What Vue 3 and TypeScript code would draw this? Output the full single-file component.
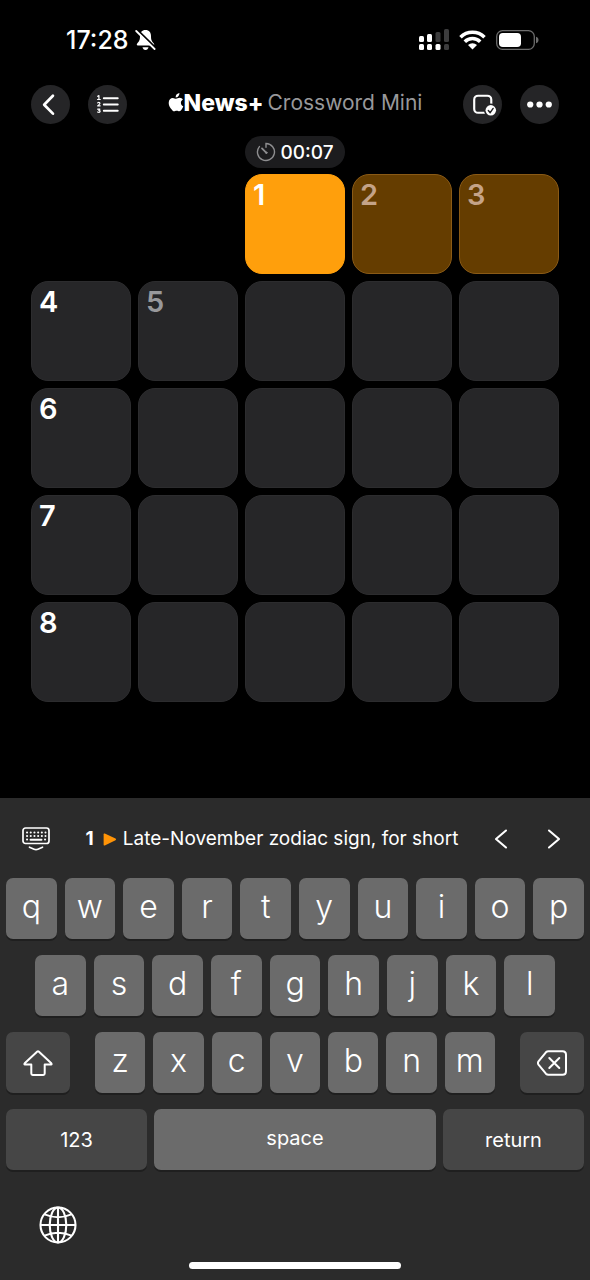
<script setup lang="ts">
import { ref } from 'vue'

interface Cell {
  id: string
  num?: number
  dim?: boolean
  blank?: boolean
  word?: boolean
}

const layout: (number | null)[][] = [
  [null, null, 1, 2, 3],
  [4, 5, 0, 0, 0],
  [6, 0, 0, 0, 0],
  [7, 0, 0, 0, 0],
  [8, 0, 0, 0, 0],
]
const dimmed = [2, 3, 5]

const cells: Cell[] = layout.flatMap((row, r) =>
  row.map((n, c) => ({
    id: `${r}-${c}`,
    num: n || undefined,
    dim: n !== null && dimmed.includes(n),
    blank: n === null,
    word: r === 0 && n !== null,
  })),
)

const selected = ref('0-2')
const topRow = 'qwertyuiop'.split('')
const homeRow = 'asdfghjkl'.split('')
const bottomRow = 'zxcvbnm'.split('')
</script>

<template>
  <div class="screen">
    <div class="status">
      <div class="status-left">
        <span class="clock">17:28</span>
        <svg width="21" height="22" viewBox="0 0 21 22" aria-hidden="true">
          <path d="M10.5 1C6.8 1 5 3.600 5 7c0 4.200-1 5.600-2.600 7.200-.9.900-.9 2.300.5 2.300h15.200c1.400 0 1.400-1.400.5-2.300C17 12.600 16 11.200 16 7c0-3.400-1.800-6-5.500-6z" fill="#fff" />
          <path d="M7.500 18.200h6c-.3 1.600-1.400 2.800-3 2.800s-2.700-1.200-3-2.800z" fill="#fff" />
          <path d="M2 .600l19 18.600" stroke="#000" stroke-width="2" />
          <path d="M1.200 2l18.400 18" stroke="#fff" stroke-width="1.800" stroke-linecap="round" />
        </svg>
      </div>
      <div class="status-right">
        <svg width="30" height="22" viewBox="0 0 30 22" aria-hidden="true">
          <g fill="#fff">
            <rect x="0" y="7" width="5" height="6" rx="1.500" />
            <rect x="8" y="5" width="5" height="8" rx="1.500" />
            <rect x="0" y="15" width="5" height="6" rx="1.500" />
            <rect x="8" y="15" width="5" height="6" rx="1.500" />
            <rect x="16.500" y="15" width="5" height="6" rx="1.500" />
          </g>
          <g fill="#3c3c3d">
            <rect x="16.500" y="3" width="5" height="10" rx="1.500" />
            <rect x="25" y="0" width="5" height="13" rx="1.500" />
            <rect x="25" y="15" width="5" height="6" rx="1.500" />
          </g>
        </svg>
        <svg width="27" height="20" viewBox="0 0 27 20" aria-hidden="true">
          <g fill="none" stroke="#fff" stroke-width="3.600">
            <path d="M1.500 7.200a17.200 17.200 0 0 1 24 0" />
            <path d="M5.800 11.700a11 11 0 0 1 15.400 0" />
          </g>
          <path d="M9 14.900a6.700 6.700 0 0 1 9 0L13.500 19.500z" fill="#fff" />
        </svg>
        <svg width="43" height="20" viewBox="0 0 43 20" aria-hidden="true">
          <rect x=".7" y=".7" width="37.600" height="18.600" rx="5.800" fill="none" stroke="#6c6c6c" stroke-width="1.300" />
          <rect x="3" y="3" width="22" height="14" rx="3.800" fill="#fff" />
          <path d="M40 6.800c1.800.5 2.500 1.700 2.500 3.200s-.7 2.700-2.500 3.200z" fill="#6c6c6c" />
        </svg>
      </div>
    </div>

    <header class="header">
      <div class="pair">
        <button class="round" aria-label="Back">
          <svg width="39" height="39" viewBox="0 0 40 40">
            <path d="M22.500 11l-9 9.200 9 9.200" fill="none" stroke="#fff" stroke-width="2.800" stroke-linecap="round" stroke-linejoin="round" />
          </svg>
        </button>
        <button class="round" aria-label="Puzzle list">
          <svg width="39" height="39" viewBox="0 0 40 40" fill="none" stroke="#fff" stroke-linecap="round" stroke-linejoin="round">
            <path d="M16.200 13.500h14.300M16.200 20h14.300M16.200 26.500h14.300" stroke-width="2" />
            <path d="M10 11.600l1.200-.8v4M9.800 14.900h2.800M9.900 18.400q1.200-1.100 2.100-.2.600.9-.4 1.700L9.900 21.400h2.600M9.900 24.800h2.300l-1.100 1.300q1.500 0 1.300 1.200-.8 1.300-2.600.4" stroke-width="1.200" />
          </svg>
        </button>
      </div>
      <h1 class="title">
        <svg width="16" height="19" viewBox="0 0 15 19" aria-hidden="true">
          <path d="M10.900 0c.1 1.300-.4 2.400-1.100 3.200-.7.800-1.700 1.300-2.600 1.200-.1-1.200.5-2.400 1.100-3.100C9 .5 10 .1 10.900 0zM14.400 6.600c-1.300.8-2 1.800-2 3.200 0 1.600.9 2.900 2.400 3.500-.4 1.200-1 2.300-1.700 3.300-.7.900-1.300 1.700-2.300 1.700-1 0-1.300-.6-2.600-.6s-1.700.6-2.600.6c-1 0-1.700-.8-2.400-1.800C1.800 14.900.2 12.500.2 9.900c0-3.200 2-5 4.100-5 1.200 0 2.300.8 3.300.8.900 0 2.100-.9 3.600-.9 1.300 0 2.500.7 3.200 1.800z" fill="#fff" />
        </svg><strong>News+</strong><span>Crossword Mini</span>
      </h1>
      <div class="pair">
        <button class="round" aria-label="Check puzzle">
          <svg width="39" height="39" viewBox="0 0 40 40">
            <rect x="11.500" y="11" width="17.500" height="17.500" rx="4" fill="none" stroke="#fff" stroke-width="2.200" />
            <circle cx="28.500" cy="26" r="7" fill="#252527" />
            <circle cx="28.500" cy="26" r="5.400" fill="#fff" />
            <path d="M26 26.200l1.900 2.200 3-4.400" fill="none" stroke="#252527" stroke-width="1.500" stroke-linecap="round" stroke-linejoin="round" />
          </svg>
        </button>
        <button class="round" aria-label="More">
          <svg width="39" height="39" viewBox="0 0 40 40" fill="#fff">
            <circle cx="10.500" cy="20" r="3.200" /><circle cx="20" cy="20" r="3.200" /><circle cx="29.500" cy="20" r="3.200" />
          </svg>
        </button>
      </div>
    </header>

    <main class="board">
      <div class="timer">
        <svg width="20" height="20" viewBox="0 0 20 20" fill="none" stroke="#8e8e90" stroke-linecap="round" aria-hidden="true">
          <path d="M10 5.200V1.500A8.500 8.500 0 1 1 3.400 4.600" stroke-width="1.400" />
          <path d="M6 6.400L10.400 10.800" stroke-width="1.800" />
          <circle cx="10.300" cy="10.700" r=".7" fill="#8e8e90" />
        </svg>
        <time>00:07</time>
      </div>
      <div class="grid">
        <template v-for="cell in cells" :key="cell.id">
          <span v-if="cell.blank" />
          <button
            v-else
            class="cell"
            :class="{ word: cell.word, selected: cell.id === selected, dim: cell.dim }"
            :aria-label="cell.num ? `Square ${cell.num}` : 'Empty square'"
            @click="selected = cell.id"
          >{{ cell.num }}</button>
        </template>
      </div>
    </main>

    <section class="keyboard">
      <div class="clue">
        <button class="plain" aria-label="Hide keyboard">
          <svg width="28" height="24" viewBox="0 0 28 24" fill="none" stroke="#fff" stroke-linecap="round">
            <rect x="1" y="1" width="26" height="15.500" rx="2.500" stroke-width="1.700" />
            <path d="M5 5.500h18.500M5 9h18.500M5 12.500h.1M23 12.500h.1" stroke-width="2" stroke-dasharray=".1 3.600" />
            <path d="M8.500 12.700h11" stroke-width="1.900" />
            <path d="M7.500 20.200l4.600 2q1.900.8 3.800 0l4.600-2" stroke-width="1.700" />
          </svg>
        </button>
        <p class="clue-text">
          <b>1</b>
          <svg width="14" height="13" viewBox="0 0 14 13" aria-hidden="true">
            <path d="M.6 1.400Q.6.200 1.800.6L12.500 5.600Q13.800 6.500 12.500 7.200L1.800 12.400Q.6 12.800.6 11.600z" fill="#ff9407" />
          </svg>
          <span>Late-November zodiac sign, for short</span>
        </p>
        <div class="arrows">
          <button class="plain" aria-label="Previous clue">
            <svg width="14" height="20" viewBox="0 0 14 20"><path d="M12 1.500L2 10l10 8.500" fill="none" stroke="#fff" stroke-width="2.100" stroke-linecap="round" stroke-linejoin="round" /></svg>
          </button>
          <button class="plain" aria-label="Next clue">
            <svg width="14" height="20" viewBox="0 0 14 20"><path d="M2 1.500L12 10 2 18.500" fill="none" stroke="#fff" stroke-width="2.100" stroke-linecap="round" stroke-linejoin="round" /></svg>
          </button>
        </div>
      </div>

      <div class="keys">
        <div class="row">
          <button v-for="k in topRow" :key="k" class="key">{{ k }}</button>
        </div>
        <div class="row home">
          <button v-for="k in homeRow" :key="k" class="key">{{ k }}</button>
        </div>
        <div class="row lower">
          <button class="key dark side" aria-label="Shift">
            <svg width="30" height="26" viewBox="0 0 30 26"><path d="M14.300 1.600q.7-.6 1.400 0L28.300 13.300q.8 1-.4 1.300H21.700v9q0 1.400-1.400 1.400H9.700q-1.400 0-1.400-1.400v-9H2.100q-1.200-.3-.4-1.300z" fill="none" stroke="#fff" stroke-width="2" stroke-linejoin="round" /></svg>
          </button>
          <div class="row letters">
            <button v-for="k in bottomRow" :key="k" class="key">{{ k }}</button>
          </div>
          <button class="key dark side" aria-label="Delete">
            <svg width="30" height="26" viewBox="0 0 30 26" fill="none" stroke="#fff" stroke-width="2" stroke-linejoin="round" stroke-linecap="round">
              <path d="M11.500 1.200H25.500q3.500 0 3.500 3.500V21.300q0 3.500-3.500 3.500H11.500q-1.500 0-2.600-1.100L1.500 14.600q-1.200-1.600 0-3.200L8.900 2.300Q10 1.200 11.500 1.200z" />
              <path d="M12.300 8l10 10M22.300 8l-10 10" />
            </svg>
          </button>
        </div>
        <div class="row bottom">
          <button class="key dark wide">123</button>
          <button class="key space">space</button>
          <button class="key dark wide">return</button>
        </div>
      </div>

      <div class="foot">
        <button class="plain" aria-label="Next keyboard">
          <svg width="38" height="38" viewBox="0 0 38 38" fill="none" stroke="#fff" stroke-width="2.100">
            <circle cx="19" cy="19" r="17.500" />
            <ellipse cx="19" cy="19" rx="8.300" ry="17.500" />
            <path d="M19 1.500v35M1.500 19h35M5.500 8.400q13.500 5.600 27 0M5.500 29.600q13.500-5.600 27 0" />
          </svg>
        </button>
      </div>
      <div class="home-bar" />
    </section>
  </div>
</template>

<style>
body {
  margin: 0;
  background: #000;
}
</style>

<style scoped>
.screen {
  display: flex;
  flex-direction: column;
  min-height: 100vh;
  background: #000;
  color: #fff;
  font-family: Inter, "Liberation Sans", sans-serif;
}
button {
  margin: 0;
  padding: 0;
  border: 0;
  font: inherit;
  color: inherit;
  cursor: pointer;
}
svg {
  display: block;
  flex: none;
}
.status {
  display: flex;
  justify-content: space-between;
  align-items: center;
  height: 80px;
  padding: 0 51px 0 66px;
}
.status-left {
  display: flex;
  align-items: center;
  gap: 6px;
}
.clock {
  font-size: 25px;
  font-weight: 500;
}
.status-right {
  display: flex;
  align-items: center;
  gap: 10px;
}
.header {
  display: flex;
  align-items: center;
  justify-content: space-between;
  height: 48px;
  padding: 0 31px;
}
.pair {
  display: flex;
  gap: 18px;
}
.round {
  width: 39px;
  height: 39px;
  border-radius: 50%;
  background: #252527;
}
.title {
  display: flex;
  align-items: center;
  margin: 0;
  padding-bottom: 3px;
  font-size: 21px;
  font-weight: 400;
  line-height: 28px;
  white-space: nowrap;
}
.title strong {
  font-size: 23px;
  font-weight: 800;
}
.title span {
  margin-left: 4px;
  color: #98989b;
}
.board {
  display: flex;
  flex-direction: column;
  align-items: center;
  gap: 6px;
  padding: 8px 31px 96px;
}
.timer {
  display: flex;
  align-items: center;
  justify-content: center;
  gap: 4px;
  box-sizing: border-box;
  width: 100px;
  height: 32px;
  border-radius: 16px;
  background: #1c1c1e;
  font-size: 19px;
  font-weight: 500;
}
.grid {
  display: grid;
  grid-template-columns: repeat(5, 1fr);
  gap: 7px;
  width: 100%;
}
.cell {
  display: flex;
  align-items: flex-start;
  box-sizing: border-box;
  aspect-ratio: 1;
  padding: 3px 7px;
  border: 1px solid #2c2c2e;
  border-radius: 17px;
  background: #262628;
  font-size: 29px;
  line-height: 34px;
  font-weight: 600;
}
.cell.dim {
  color: #98989b;
}
.cell.word {
  background: #653d00;
  border-color: #8a5a16;
}
.cell.word.dim {
  color: #c4a388;
}
.cell.selected {
  background: #ff9f0c;
  border-color: #ff9f0c;
}
.keyboard {
  flex: 1;
  display: flex;
  flex-direction: column;
  background: #2b2b2b;
}
.clue {
  display: flex;
  align-items: center;
  justify-content: space-between;
  box-sizing: border-box;
  height: 80px;
  padding: 2px 29px 0 22px;
}
.plain {
  background: none;
}
.clue-text {
  display: flex;
  align-items: center;
  gap: 6px;
  margin: 0;
  font-size: 19px;
  line-height: 24px;
  white-space: nowrap;
}
.clue-text b {
  margin-right: 3px;
  font-weight: 700;
}
.arrows {
  display: flex;
  gap: 39px;
}
.keys {
  display: flex;
  flex-direction: column;
  gap: 16px;
  padding: 0 6px;
}
.row {
  display: flex;
  gap: 8px;
}
.home {
  padding: 0 29px;
}
.lower {
  gap: 25px;
}
.bottom {
  gap: 7px;
}
.letters {
  flex: 1;
}
.key {
  display: flex;
  flex: 1;
  align-items: center;
  justify-content: center;
  box-sizing: border-box;
  min-width: 0;
  height: 61px;
  padding-bottom: 4px;
  border-radius: 7px;
  background: #6b6b6b;
  box-shadow: 0 2px 0 #1f1f1f;
  font-size: 32px;
  line-height: 40px;
  font-weight: 350;
}
.dark {
  background: #464646;
  padding-bottom: 0;
}
.side {
  flex: none;
  width: 64px;
}
.wide,
.space {
  font-size: 20px;
  font-weight: 400;
}
.space {
  flex: 2;
}
.foot {
  padding: 36px 39px 0;
}
.home-bar {
  align-self: center;
  width: 36%;
  height: 7px;
  margin: auto 0 11px;
  border-radius: 4px;
  background: #fff;
}
</style>
